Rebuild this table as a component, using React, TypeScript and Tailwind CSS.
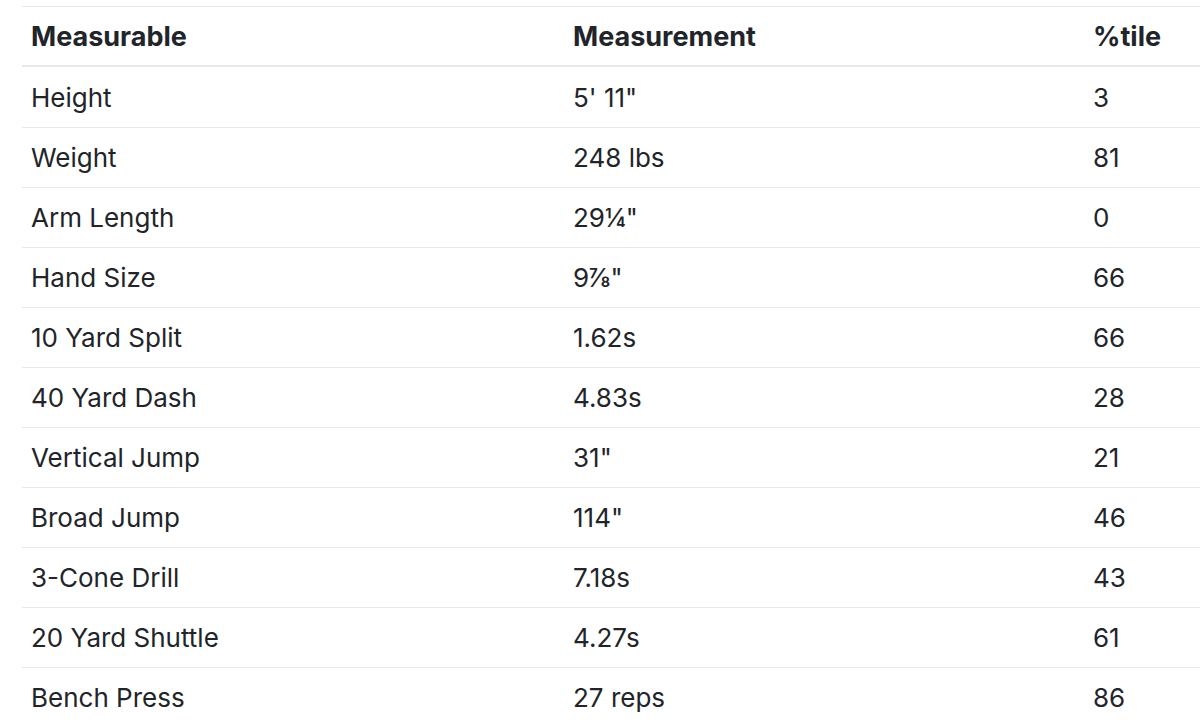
import React from 'react';

const rows = [
  { name: 'Height', value: '5\' 11"', pct: '3' },
  { name: 'Weight', value: '248 lbs', pct: '81' },
  { name: 'Arm Length', value: '29¼"', pct: '0' },
  { name: 'Hand Size', value: '9⅞"', pct: '66' },
  { name: '10 Yard Split', value: '1.62s', pct: '66' },
  { name: '40 Yard Dash', value: '4.83s', pct: '28' },
  { name: 'Vertical Jump', value: '31"', pct: '21' },
  { name: 'Broad Jump', value: '114"', pct: '46' },
  { name: '3-Cone Drill', value: '7.18s', pct: '43' },
  { name: '20 Yard Shuttle', value: '4.27s', pct: '61' },
  { name: 'Bench Press', value: '27 reps', pct: '86' },
];

export default function App() {
  return (
    <div className="h-[726px] w-[1200px] overflow-hidden bg-white pl-[22px] pt-[6px] font-['Inter',sans-serif] text-[26px] text-[#212529]">
      <div className="w-[1240px]">
        {/* header */}
        <div className="grid h-[61px] grid-cols-[542px_520px_1fr] items-center border-t border-b-2 border-[#e6e8eb] pt-[3px] text-[27px] font-bold">
          <div className="px-[9px]">Measurable</div>
          <div className="px-[9px]">Measurement</div>
          <div className="px-[9px]">%tile</div>
        </div>

        {/* body */}
        {rows.map((r, i) => (
          <div
            key={r.name}
            className={`grid h-[60px] grid-cols-[542px_520px_1fr] items-center ${i > 0 ? 'border-t border-[#e6e8eb]' : ''}`}
          >
            <div className="px-[9px]">{r.name}</div>
            <div className="px-[9px]">{r.value}</div>
            <div className="px-[9px]">{r.pct}</div>
          </div>
        ))}
      </div>
    </div>
  );
}
